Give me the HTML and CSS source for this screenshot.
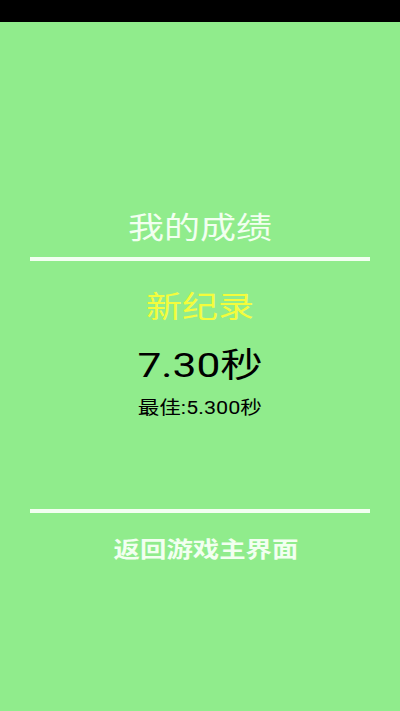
FILE: index.html
```html
<!DOCTYPE html>
<html lang="zh-CN">
<head>
<meta charset="utf-8">
<title>我的成绩</title>
<link rel="stylesheet" href="styles.css">
</head>
<body>
<div class="status-bar"></div>
<main class="result">
  <h1 class="title"><span class="stretch">我的成绩</span></h1>
  <div class="rule"></div>
  <p class="record"><span class="stretch">新纪录</span></p>
  <p class="time"><span class="stretch">7.30秒</span></p>
  <p class="best"><span class="stretch">最佳:5.300秒</span></p>
  <div class="rule rule-bottom"></div>
  <a class="back" href="#"><span class="stretch">返回游戏主界面</span></a>
</main>
</body>
</html>
```
FILE: styles.css
```css
html, body {
  margin: 0;
  padding: 0;
}
body {
  width: 400px;
  height: 711px;
  background: #90ec8c;
  font-family: Roboto, "Noto Sans CJK SC", sans-serif;
  overflow: hidden;
}
.status-bar {
  height: 22px;
  background: #000;
}
.result {
  display: flex;
  flex-direction: column;
  align-items: stretch;
  padding: 0 30px;
}
.title, .record, .time, .best, .back {
  margin: 0;
  text-align: center;
  font-weight: normal;
}
.stretch {
  display: inline-block;
  transform: scaleX(1.2);
  white-space: nowrap;
}
.title {
  margin-top: 188px;
  font-size: 30px;
  line-height: 36px;
  color: #f2fff0;
}
.rule {
  margin-top: 11px;
  height: 4px;
  background: #f2fff0;
}
.record {
  margin-top: 28px;
  font-size: 30px;
  line-height: 36px;
  color: #f4fc3c;
}
.time {
  margin-top: 20px;
  font-size: 34px;
  line-height: 40px;
  color: #000;
}
.time .stretch {
  transform: scaleX(1.25);
}
.best {
  margin-top: 11px;
  font-size: 18px;
  line-height: 24px;
  color: #000;
}
.rule-bottom {
  margin-top: 89px;
}
.back {
  display: block;
  margin-top: 22px;
  padding-left: 13px;
  font-size: 22px;
  line-height: 30px;
  font-weight: bold;
  color: #f2fff0;
  text-decoration: none;
}
```
